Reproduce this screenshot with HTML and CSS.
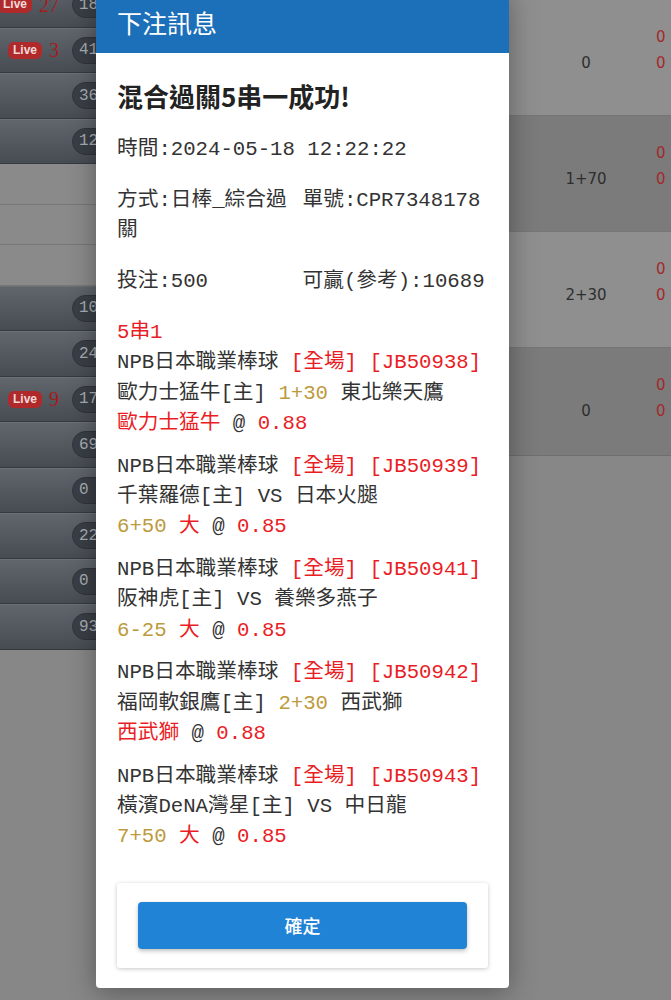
FILE: index.html
```html
<!DOCTYPE html>
<html>
<head>
  <meta charset="utf-8">
  <title>下注訊息</title>
  <link rel="stylesheet" href="styles.css">
</head>
<body>
  <div class="board">
    <div class="games">
      <div class="game-row"><div class="row-tag"><span class="live">Live</span><span class="live-num">27</span></div><span class="pill">184</span></div>
      <div class="game-row"><div class="row-tag"><span class="live">Live</span><span class="live-num">3</span></div><span class="pill">41</span></div>
      <div class="game-row"><div class="row-tag"></div><span class="pill">36</span></div>
      <div class="game-row"><div class="row-tag"></div><span class="pill">125</span></div>
      <div class="game-row blank"></div>
      <div class="game-row blank"></div>
      <div class="game-row blank"></div>
      <div class="game-row"><div class="row-tag"></div><span class="pill">105</span></div>
      <div class="game-row"><div class="row-tag"></div><span class="pill">24</span></div>
      <div class="game-row"><div class="row-tag"><span class="live">Live</span><span class="live-num">9</span></div><span class="pill">17</span></div>
      <div class="game-row"><div class="row-tag"></div><span class="pill">69</span></div>
      <div class="game-row"><div class="row-tag"></div><span class="pill">0</span></div>
      <div class="game-row"><div class="row-tag"></div><span class="pill">22</span></div>
      <div class="game-row"><div class="row-tag"></div><span class="pill">0</span></div>
      <div class="game-row"><div class="row-tag"></div><span class="pill">93</span></div>
    </div>

    <div class="odds">
      <div class="odds-panel">
        <div class="odds-val">0</div>
        <div class="odds-side">0<br>0</div>
      </div>
      <div class="odds-panel dark">
        <div class="odds-val">1+70</div>
        <div class="odds-side">0<br>0</div>
      </div>
      <div class="odds-panel">
        <div class="odds-val">2+30</div>
        <div class="odds-side">0<br>0</div>
      </div>
      <div class="odds-panel dark last">
        <div class="odds-val">0</div>
        <div class="odds-side">0<br>0</div>
      </div>
    </div>
  </div>

  <!-- bet result dialog -->
  <div class="modal">
    <div class="modal-head">下注訊息</div>
    <div class="modal-body">
      <h2 class="result-title">混合過關5串一成功!</h2>
      <p class="info">時間:2024-05-18 12:22:22</p>
      <div class="info info-row">
        <span>方式:日棒_綜合過關</span>
        <span>單號:CPR7348178</span>
      </div>
      <div class="info info-row">
        <span>投注:500</span>
        <span>可贏(參考):10689</span>
      </div>

      <div class="parlay">
        <div class="red">5串1</div>
        <div class="leg">
          <div>NPB日本職業棒球 <span class="red">[全場] [JB50938]</span></div>
          <div>歐力士猛牛[主] <span class="gold">1+30</span> 東北樂天鷹</div>
          <div><span class="red">歐力士猛牛</span> @ <span class="red">0.88</span></div>
        </div>
        <div class="leg">
          <div>NPB日本職業棒球 <span class="red">[全場] [JB50939]</span></div>
          <div>千葉羅德[主] VS 日本火腿</div>
          <div><span class="gold">6+50</span> <span class="red">大</span> @ <span class="red">0.85</span></div>
        </div>
        <div class="leg">
          <div>NPB日本職業棒球 <span class="red">[全場] [JB50941]</span></div>
          <div>阪神虎[主] VS 養樂多燕子</div>
          <div><span class="gold">6-25</span> <span class="red">大</span> @ <span class="red">0.85</span></div>
        </div>
        <div class="leg">
          <div>NPB日本職業棒球 <span class="red">[全場] [JB50942]</span></div>
          <div>福岡軟銀鷹[主] <span class="gold">2+30</span> 西武獅</div>
          <div><span class="red">西武獅</span> @ <span class="red">0.88</span></div>
        </div>
        <div class="leg">
          <div>NPB日本職業棒球 <span class="red">[全場] [JB50943]</span></div>
          <div>橫濱DeNA灣星[主] VS 中日龍</div>
          <div><span class="gold">7+50</span> <span class="red">大</span> @ <span class="red">0.85</span></div>
        </div>
      </div>

      <div class="confirm-card">
        <button type="button" class="confirm-btn">確定</button>
      </div>
    </div>
  </div>
</body>
</html>
```

FILE: styles.css
```css
body {
  margin: 0;
  height: 1000px;
  overflow: hidden;
  position: relative;
  background: #878787;
  font-family: "Liberation Sans", "Noto Sans CJK TC", sans-serif;
}

.board {
  display: flex;
  justify-content: space-between;
}

/* left column: game rows behind the dialog */
.games {
  width: 120px;
  margin-top: -18px;
}

.game-row {
  height: 45.5px;
  box-sizing: border-box;
  display: flex;
  align-items: center;
  background: linear-gradient(#61666d, #474c53);
  border-top: 1px solid #6b7077;
  border-bottom: 1px solid #363a40;
}

.game-row.blank {
  height: 40.5px;
  background: #8a8a8a;
  border-top: none;
  border-bottom: 1px solid #777;
}

.row-tag {
  width: 72px;
  box-sizing: border-box;
  padding-right: 13px;
  display: flex;
  justify-content: flex-end;
  align-items: center;
  gap: 7px;
}

.live {
  background: #b02a2b;
  color: #f1dada;
  font-weight: bold;
  font-size: 12px;
  line-height: 15px;
  padding: 1px 5px;
  border-radius: 6px;
}

.live-num {
  color: #a31c1c;
  font-family: "Liberation Serif", serif;
  font-size: 20px;
  line-height: 20px;
}

.pill {
  height: 27px;
  box-sizing: border-box;
  min-width: 40px;
  padding: 0 6px;
  display: flex;
  align-items: center;
  border-radius: 14px;
  background: #3a3f46;
  border: 1px solid #30343a;
  color: #a9aeb3;
  font-family: "Liberation Mono", monospace;
  font-size: 16px;
}

/* right column: odds panels */
.odds {
  width: 162px;
}

.odds-panel {
  height: 116px;
  box-sizing: border-box;
  display: flex;
  background: #8f8f8f;
  border-bottom: 1px solid #767676;
  font-family: "DejaVu Sans", sans-serif;
  font-size: 15px;
  line-height: 26px;
}

.odds-panel.dark {
  background: #7b7b7b;
}

.odds-panel.last {
  height: 108px;
  border-bottom-color: #6f6f6f;
}

.odds-val {
  width: 147px;
  box-sizing: border-box;
  padding: 50px 0 0 7px;
  text-align: center;
  color: #2e2e2e;
}

.odds-side {
  padding-top: 24px;
  color: #a3292b;
}

/* dialog */
.modal {
  position: absolute;
  top: -10px;
  left: 96px;
  width: 413px;
  background: #fff;
  border-radius: 0 0 4px 4px;
  box-shadow: 0 4px 28px rgba(0, 0, 0, 0.35);
}

.modal-head {
  background: #1c6fb9;
  color: #fff;
  font-family: "Noto Sans CJK TC", sans-serif;
  font-size: 25px;
  line-height: 37px;
  padding: 14px 21px 12px;
}

.modal-body {
  padding: 26px 21px 20px;
  color: #333;
  font-family: "Liberation Mono", "Noto Sans CJK TC", monospace;
  font-size: 20.7px;
  line-height: 30px;
}

.result-title {
  margin: 0 0 22px;
  color: #222;
  font-family: "Noto Sans CJK TC", sans-serif;
  font-size: 26px;
  line-height: 34px;
  font-weight: bold;
}

.info {
  margin: 0 0 21px;
}

.info-row {
  display: grid;
  grid-template-columns: 1fr 1fr;
}

.parlay {
  line-height: 30.3px;
}

.leg + .leg {
  margin-top: 12.5px;
}

.red {
  color: #ea1d25;
}

.gold {
  color: #bd9a3c;
}

.confirm-card {
  margin-top: 30px;
  padding: 19px 21px;
  border-radius: 3px;
  box-shadow: 0 1px 4px rgba(0, 0, 0, 0.22);
}

.confirm-btn {
  display: block;
  width: 100%;
  height: 47px;
  border: none;
  border-radius: 4px;
  background: #2183d6;
  color: #fff;
  font-family: "Noto Sans CJK TC", sans-serif;
  font-size: 18px;
  font-weight: 500;
  box-shadow: 0 2px 4px rgba(0, 0, 0, 0.25);
  cursor: pointer;
}
```
